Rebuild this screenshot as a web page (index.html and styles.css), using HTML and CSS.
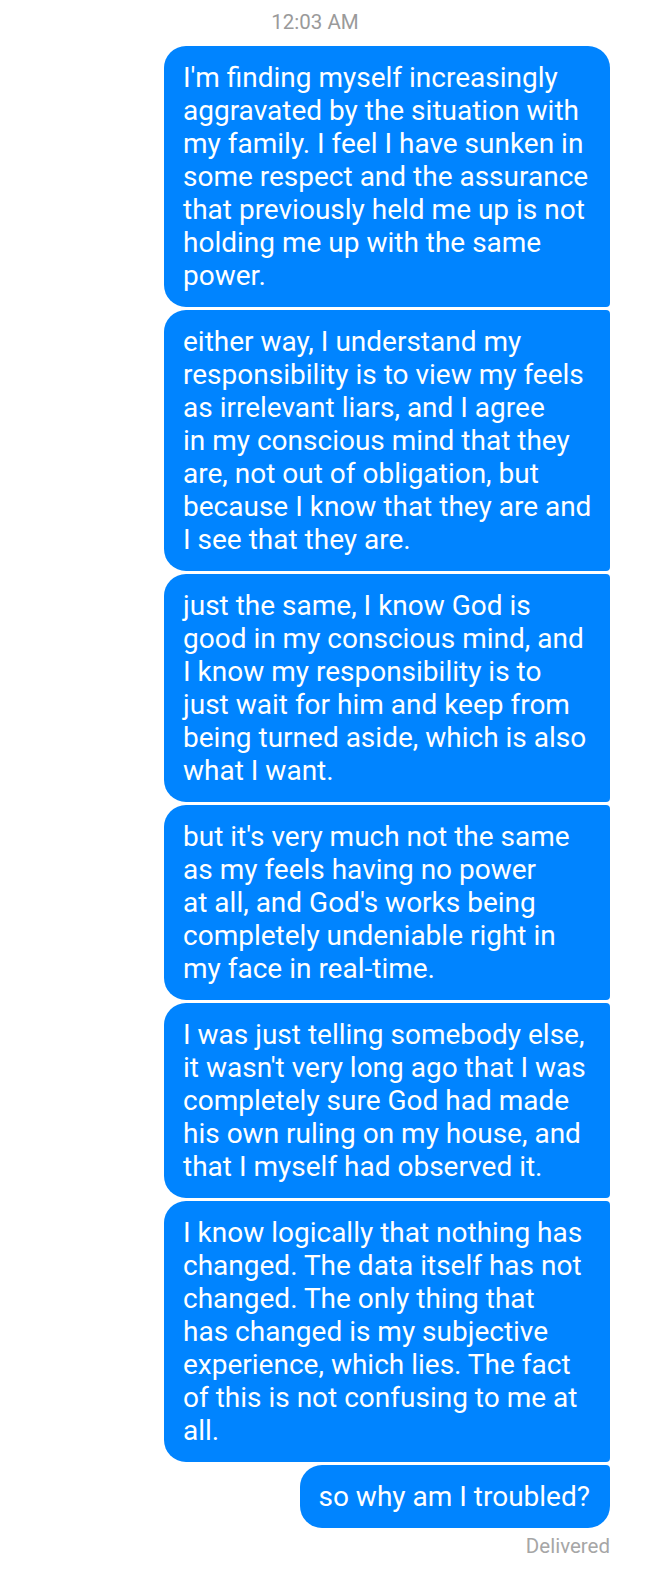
FILE: index.html
```html
<!DOCTYPE html>
<html>
<head>
<meta charset="utf-8">
<link rel="stylesheet" href="styles.css">
</head>
<body>
<div class="thread">
  <div class="time">12:03 AM</div>
  <div class="group">
    <div class="bubble wide first">I'm finding myself increasingly<br>aggravated by the situation with<br>my family. I feel I have sunken in<br>some respect and the assurance<br>that previously held me up is not<br>holding me up with the same<br>power.</div>
    <div class="bubble wide">either way, I understand my<br>responsibility is to view my feels<br>as irrelevant liars, and I agree<br>in my conscious mind that they<br>are, not out of obligation, but<br>because I know that they are and<br>I see that they are.</div>
    <div class="bubble wide">just the same, I know God is<br>good in my conscious mind, and<br>I know my responsibility is to<br>just wait for him and keep from<br>being turned aside, which is also<br>what I want.</div>
    <div class="bubble wide">but it's very much not the same<br>as my feels having no power<br>at all, and God's works being<br>completely undeniable right in<br>my face in real-time.</div>
    <div class="bubble wide">I was just telling somebody else,<br>it wasn't very long ago that I was<br>completely sure God had made<br>his own ruling on my house, and<br>that I myself had observed it.</div>
    <div class="bubble wide">I know logically that nothing has<br>changed. The data itself has not<br>changed. The only thing that<br>has changed is my subjective<br>experience, which lies. The fact<br>of this is not confusing to me at<br>all.</div>
    <div class="bubble last">so why am I troubled?</div>
  </div>
  <div class="status">Delivered</div>
</div>
</body>
</html>
```

FILE: styles.css
```css
html, body {
  margin: 0;
  padding: 0;
  background: #ffffff;
}

body {
  font-family: Roboto, "Noto Sans", sans-serif;
  width: 648px;
  height: 1574px;
  overflow: hidden;
}

.thread {
  display: flex;
  flex-direction: column;
  align-items: flex-end;
  padding: 10px 38px 0 0;
}

.time {
  align-self: stretch;
  padding-left: 20px;
  text-align: center;
  font-size: 20.5px;
  line-height: 24px;
  color: #9a9a9a;
  margin-bottom: 12px;
}

.group {
  display: flex;
  flex-direction: column;
  align-items: flex-end;
  gap: 3px;
}

.bubble {
  background: #0084ff;
  color: #ffffff;
  font-size: 28px;
  line-height: 33px;
  padding: 15px 19px 15px 19px;
  white-space: nowrap;
  border-radius: 22px 4px 4px 22px;
}

.bubble.wide {
  width: 408px;
}

.bubble.first {
  border-radius: 22px 22px 4px 22px;
}

.bubble.last {
  border-radius: 22px 4px 22px 22px;
  padding-right: 20px;
}

.status {
  margin-top: 6px;
  font-size: 20.5px;
  line-height: 24px;
  color: #a6a6a6;
}
```
